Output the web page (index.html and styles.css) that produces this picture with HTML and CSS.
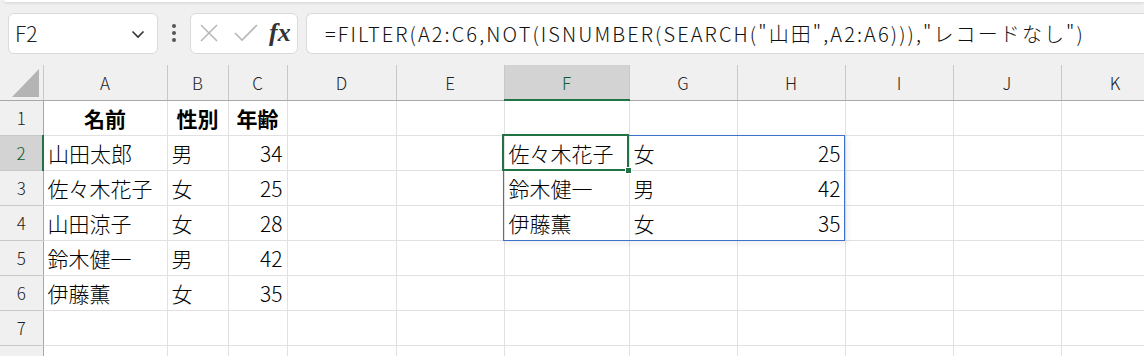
FILE: index.html
```html
<!DOCTYPE html>
<html lang="ja">
<head>
    <meta charset="UTF-8">
    <title>FILTER</title>
    <link rel="stylesheet" href="styles.css">
</head>
<body>
    <div class="ribbon-edge"></div>

    <!-- 数式バー -->
    <div class="formula-bar">
        <div class="name-box">
            <span>F2</span>
            <svg class="chevron" width="14" height="9" viewBox="0 0 14 9">
                <path d="M1.5 1.5 L7 7 L12.5 1.5" fill="none" stroke="#333" stroke-width="1.6"/>
            </svg>
        </div>
        <div class="dots"><i></i><i></i><i></i></div>
        <div class="icon-box">
            <svg width="20" height="20" viewBox="0 0 20 20">
                <path d="M2 2 L18 18 M18 2 L2 18" stroke="#b8b8b8" stroke-width="1.6"/>
            </svg>
            <svg width="26" height="20" viewBox="0 0 26 20">
                <path d="M2 10 L9 17 L24 2" fill="none" stroke="#b8b8b8" stroke-width="1.6"/>
            </svg>
            <span class="fx">fx</span>
        </div>
        <div class="formula-box">=FILTER(A2:C6,NOT(ISNUMBER(SEARCH("山田",A2:A6))),"レコードなし")</div>
    </div>

    <!-- シート -->
    <div class="sheet">
        <table class="grid">
            <colgroup>
                <col style="width:43px">
                <col style="width:124px">
                <col style="width:61px">
                <col style="width:59px">
                <col style="width:109px">
                <col style="width:108px">
                <col style="width:125px">
                <col style="width:108px">
                <col style="width:108px">
                <col style="width:108px">
                <col style="width:108px">
                <col style="width:108px">
            </colgroup>
            <thead>
                <tr>
                    <th class="corner"><span class="tri"></span></th>
                    <th>A</th><th>B</th><th>C</th><th>D</th><th>E</th>
                    <th class="sel">F</th>
                    <th>G</th><th>H</th><th>I</th><th>J</th><th>K</th>
                </tr>
            </thead>
            <tbody>
                <tr>
                    <th>1</th>
                    <td class="bold center">名前</td><td class="bold center">性別</td><td class="bold center">年齢</td>
                    <td></td><td></td><td></td><td></td><td></td><td></td><td></td><td></td>
                </tr>
                <tr>
                    <th class="sel">2</th>
                    <td>山田太郎</td><td>男</td><td class="num">34</td>
                    <td></td><td></td><td>佐々木花子</td><td>女</td><td class="num">25</td><td></td><td></td><td></td>
                </tr>
                <tr>
                    <th>3</th>
                    <td>佐々木花子</td><td>女</td><td class="num">25</td>
                    <td></td><td></td><td>鈴木健一</td><td>男</td><td class="num">42</td><td></td><td></td><td></td>
                </tr>
                <tr>
                    <th>4</th>
                    <td>山田涼子</td><td>女</td><td class="num">28</td>
                    <td></td><td></td><td>伊藤薫</td><td>女</td><td class="num">35</td><td></td><td></td><td></td>
                </tr>
                <tr>
                    <th>5</th>
                    <td>鈴木健一</td><td>男</td><td class="num">42</td>
                    <td></td><td></td><td></td><td></td><td></td><td></td><td></td><td></td>
                </tr>
                <tr>
                    <th>6</th>
                    <td>伊藤薫</td><td>女</td><td class="num">35</td>
                    <td></td><td></td><td></td><td></td><td></td><td></td><td></td><td></td>
                </tr>
                <tr>
                    <th>7</th>
                    <td></td><td></td><td></td><td></td><td></td><td></td><td></td><td></td><td></td><td></td><td></td>
                </tr>
                <tr>
                    <th></th>
                    <td></td><td></td><td></td><td></td><td></td><td></td><td></td><td></td><td></td><td></td><td></td>
                </tr>
            </tbody>
        </table>

        <!-- スピル範囲とアクティブセル -->
        <div class="spill"></div>
        <div class="active-cell"><span class="handle"></span></div>
    </div>
</body>
</html>
```

FILE: styles.css
```css
:root {
    --excel-green: #217346;
    --spill-blue: #3f70cc;
    --grid-line: #e1e1e1;
    --header-bg: #f0f0f0;
    --header-line: #c8c8c8;
}

* {
    box-sizing: border-box;
    margin: 0;
    padding: 0;
}

body {
    width: 1144px;
    height: 356px;
    overflow: hidden;
    background-color: #f0f0f0;
    font-family: "Noto Sans CJK JP", "Noto Sans", sans-serif;
    color: #000;
}

.ribbon-edge {
    height: 2px;
    margin-left: 4px;
    background-color: #fff;
    border-radius: 0 0 0 6px;
    box-shadow: 0 1px 3px rgba(0, 0, 0, 0.15);
}

/* 数式バー */
.formula-bar {
    display: flex;
    align-items: center;
    height: 63px;
    padding: 9px 0 10px 8px;
}

.name-box,
.icon-box,
.formula-box {
    height: 41px;
    background-color: #fff;
    border: 1px solid #dadada;
    border-radius: 6px;
}

.name-box {
    width: 150px;
    display: flex;
    align-items: center;
    justify-content: space-between;
    padding: 0 12px 0 6px;
    font-size: 21px;
    font-weight: 300;
    color: #222;
}

.chevron {
    margin-top: 2px;
}

.dots {
    width: 32px;
    display: flex;
    flex-direction: column;
    align-items: center;
    gap: 3px;
}

.dots i {
    width: 4px;
    height: 4px;
    border-radius: 50%;
    background-color: #555;
}

.icon-box {
    width: 108px;
    display: flex;
    align-items: center;
    padding: 0 0 0 8px;
    gap: 14px;
}

.fx {
    font-family: "Liberation Serif", serif;
    font-style: italic;
    font-weight: bold;
    font-size: 26px;
    line-height: 1;
    color: #333;
    margin-left: -4px;
}

.formula-box {
    flex: 1;
    margin-left: 8px;
    border-right: none;
    border-radius: 6px 0 0 6px;
    padding-left: 18px;
    line-height: 39px;
    font-size: 20px;
    font-weight: 300;
    letter-spacing: 2.1px;
    white-space: nowrap;
    color: #111;
}

/* シート */
.sheet {
    position: relative;
    background-color: #fff;
}

.grid {
    table-layout: fixed;
    border-collapse: collapse;
    width: 1169px;
}

.grid th,
.grid td {
    height: 35px;
    border-right: 1px solid var(--grid-line);
    border-bottom: 1px solid var(--grid-line);
    padding: 0 4px;
    font-size: 21px;
    font-weight: 300;
    white-space: nowrap;
    overflow: hidden;
    vertical-align: middle;
}

.grid th {
    background-color: var(--header-bg);
    font-weight: 300;
    font-size: 17px;
    color: #222;
    text-align: center;
    border-right-color: var(--header-line);
}

.grid thead th {
    border-bottom: 1px solid #a8a8a8;
}

.grid tbody th {
    border-right: 1px solid #a8a8a8;
    border-bottom-color: var(--header-line);
}

.grid th.sel {
    background-color: #d3d3d3;
    color: #0f5b30;
}

.grid thead th.sel {
    border-bottom: 2px solid var(--excel-green);
}

.grid tbody th.sel {
    border-right: 2px solid var(--excel-green);
}

.corner {
    position: relative;
}

.tri {
    position: absolute;
    right: 4px;
    bottom: 3px;
    width: 0;
    height: 0;
    border-left: 27px solid transparent;
    border-bottom: 28px solid #b4b4b4;
}

.grid td.bold {
    font-weight: bold;
}

.center {
    text-align: center;
}

.num {
    text-align: right;
}

.spill {
    position: absolute;
    left: 503px;
    top: 70px;
    width: 342px;
    height: 106px;
    border: 1px solid var(--spill-blue);
    box-shadow: 2px 2px 6px rgba(0, 0, 0, 0.08);
    pointer-events: none;
}

.active-cell {
    position: absolute;
    left: 502px;
    top: 69px;
    width: 127px;
    height: 37px;
    border: 2px solid var(--excel-green);
}

.handle {
    position: absolute;
    right: -5px;
    bottom: -5px;
    width: 7px;
    height: 7px;
    background-color: var(--excel-green);
    border: 1px solid #fff;
}
```
